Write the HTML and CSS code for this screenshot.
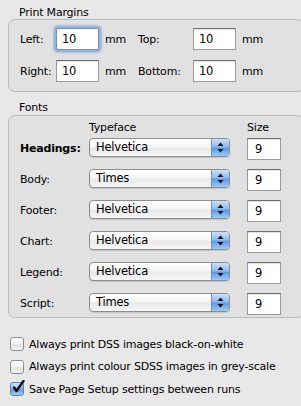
FILE: index.html
```html
<!DOCTYPE html>
<html>
<head>
<meta charset="utf-8">
<link rel="stylesheet" href="styles.css">
</head>
<body>
<div class="panel">
  <div class="group-title">Print Margins</div>
  <div class="group margins">
    <span class="lbl">Left:</span>
    <span class="field focus">10</span>
    <span class="unit">mm</span>
    <span class="lbl">Top:</span>
    <span class="field">10</span>
    <span class="unit">mm</span>
    <span class="lbl">Right:</span>
    <span class="field">10</span>
    <span class="unit">mm</span>
    <span class="lbl">Bottom:</span>
    <span class="field">10</span>
    <span class="unit">mm</span>
  </div>

  <div class="group-title second">Fonts</div>
  <div class="group fonts">
    <span></span>
    <span class="col-head">Typeface</span>
    <span class="col-head size-head">Size</span>

    <span class="lbl bold">Headings:</span>
    <div class="popup"><span class="ptext">Helvetica</span><span class="arrows"><svg width="7" height="11" viewBox="0 0 7 11"><path d="M3.5 0.5 L6.5 4 L0.5 4 Z M3.5 10.5 L6.5 7 L0.5 7 Z" fill="#111"/></svg></span></div>
    <span class="field size">9</span>

    <span class="lbl">Body:</span>
    <div class="popup"><span class="ptext">Times</span><span class="arrows"><svg width="7" height="11" viewBox="0 0 7 11"><path d="M3.5 0.5 L6.5 4 L0.5 4 Z M3.5 10.5 L6.5 7 L0.5 7 Z" fill="#111"/></svg></span></div>
    <span class="field size">9</span>

    <span class="lbl">Footer:</span>
    <div class="popup"><span class="ptext">Helvetica</span><span class="arrows"><svg width="7" height="11" viewBox="0 0 7 11"><path d="M3.5 0.5 L6.5 4 L0.5 4 Z M3.5 10.5 L6.5 7 L0.5 7 Z" fill="#111"/></svg></span></div>
    <span class="field size">9</span>

    <span class="lbl">Chart:</span>
    <div class="popup"><span class="ptext">Helvetica</span><span class="arrows"><svg width="7" height="11" viewBox="0 0 7 11"><path d="M3.5 0.5 L6.5 4 L0.5 4 Z M3.5 10.5 L6.5 7 L0.5 7 Z" fill="#111"/></svg></span></div>
    <span class="field size">9</span>

    <span class="lbl">Legend:</span>
    <div class="popup"><span class="ptext">Helvetica</span><span class="arrows"><svg width="7" height="11" viewBox="0 0 7 11"><path d="M3.5 0.5 L6.5 4 L0.5 4 Z M3.5 10.5 L6.5 7 L0.5 7 Z" fill="#111"/></svg></span></div>
    <span class="field size">9</span>

    <span class="lbl">Script:</span>
    <div class="popup"><span class="ptext">Times</span><span class="arrows"><svg width="7" height="11" viewBox="0 0 7 11"><path d="M3.5 0.5 L6.5 4 L0.5 4 Z M3.5 10.5 L6.5 7 L0.5 7 Z" fill="#111"/></svg></span></div>
    <span class="field size">9</span>
  </div>

  <div class="checks">
    <div class="check-row"><span class="box"></span><span>Always print DSS images black-on-white</span></div>
    <div class="check-row"><span class="box"></span><span>Always print colour SDSS images in grey-scale</span></div>
    <div class="check-row"><span class="box checked"><svg width="14" height="14" viewBox="0 0 14 14"><path d="M3 7.5 L5.5 11 L12.5 1" fill="none" stroke="#111" stroke-width="2.4" stroke-linecap="round" stroke-linejoin="round"/></svg></span><span>Save Page Setup settings between runs</span></div>
  </div>
</div>
</body>
</html>
```
FILE: styles.css
```css
html, body {
  margin: 0;
  padding: 0;
  background: #e8e8e8;
}
body {
  font-family: "DejaVu Sans", Verdana, sans-serif;
  font-size: 11px;
  letter-spacing: -0.2px;
  color: #000;
  width: 301px;
  height: 406px;
  overflow: hidden;
}
.panel {
  padding-top: 6px;
  display: flex;
  flex-direction: column;
}
.group-title {
  margin-left: 19px;
  line-height: 14px;
  height: 13px;
}
.group-title.second {
  margin-top: 9px;
  height: 14px;
}
.group {
  margin-left: 8px;
  width: 283px;
  border: 1px solid #b9b9b9;
  border-radius: 7px;
  background: #e1e1e1;
}
.margins {
  box-sizing: content-box;
  display: grid;
  grid-template-columns: 36px 43px 39px 55px 43px auto;
  grid-template-rows: 22px 22px;
  row-gap: 10px;
  padding: 8px 0 0 11px;
  height: 63px;
  align-items: center;
}
.lbl {
  white-space: nowrap;
}
.bold {
  font-weight: bold;
}
.unit {
  padding-left: 6px;
}
.field {
  box-sizing: border-box;
  height: 22px;
  background: #fff;
  border: 1px solid #9a9a9a;
  border-top-color: #6e6e6e;
  box-shadow: inset 0 1px 1px rgba(0,0,0,0.12);
  padding-left: 5px;
  line-height: 20px;
  font-size: 11.5px;
}
.field.focus {
  border: 1px solid #7a8fb0;
  box-shadow: 0 0 0 2px #93b4df, 0 0 2px 3px rgba(120,160,215,0.5);
  border-radius: 2px;
}
.fonts {
  box-sizing: content-box;
  display: grid;
  grid-template-columns: 69px 158px 34px;
  grid-template-rows: 12px repeat(6, 21px);
  column-gap: 0;
  row-gap: 10px;
  padding: 0 0 3px 11px;
  align-items: center;
}
.col-head {
  align-self: end;
  margin-bottom: -7px;
  line-height: 14px;
}
.popup {
  align-self: start;
  width: 141px;
  box-sizing: border-box;
  height: 19px;
  display: flex;
  border: 1px solid #8d8d8d;
  border-radius: 4px;
  background: linear-gradient(#ffffff 0%, #f6f6f6 45%, #e9e9e9 55%, #f7f7f7 100%);
  overflow: hidden;
  box-shadow: 0 1px 0 rgba(0,0,0,0.12);
}
.ptext {
  flex: 1;
  padding-left: 6px;
  line-height: 17px;
  font-size: 11.5px;
}
.arrows {
  width: 17px;
  display: flex;
  align-items: center;
  justify-content: center;
  border-left: 1px solid #6b8fc4;
  background: linear-gradient(#c9e0fb 0%, #8fbcf2 45%, #5d9ae6 55%, #9ccaf8 100%);
}
.size {
  width: 34px;
  padding-left: 7px;
}
.checks {
  margin-top: 15px;
  display: flex;
  flex-direction: column;
}
.check-row {
  height: 22.5px;
  display: flex;
  align-items: center;
  gap: 5px;
  padding-left: 10px;
}
.box {
  box-sizing: border-box;
  width: 14px;
  height: 14px;
  border: 1px solid #8e8e8e;
  border-radius: 3px;
  background: linear-gradient(#ffffff 0%, #f1f1f1 50%, #e0e0e0 55%, #f4f4f4 100%);
  position: relative;
}
.box.checked {
  border-color: #5a7fb5;
  background: linear-gradient(#cfe4fb 0%, #93bff2 45%, #5f9be5 55%, #a3cff9 100%);
}
.box.checked svg {
  position: absolute;
  left: 0;
  top: -3px;
}
```
